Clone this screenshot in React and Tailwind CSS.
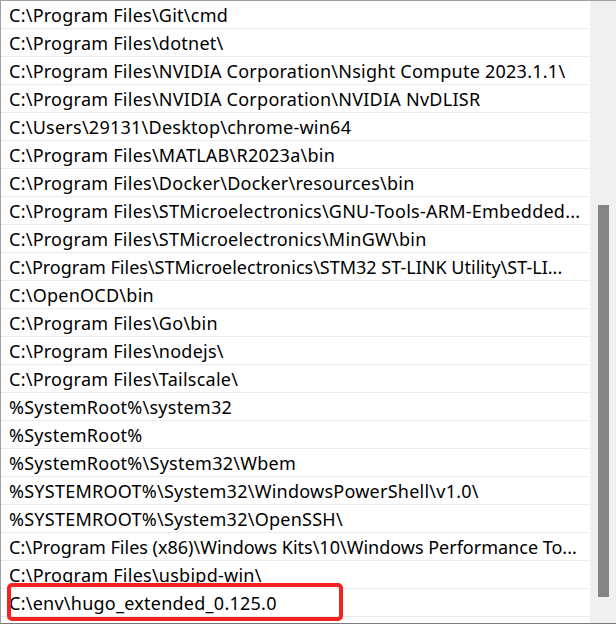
const paths = [
  "C:\\Program Files\\Git\\cmd",
  "C:\\Program Files\\dotnet\\",
  "C:\\Program Files\\NVIDIA Corporation\\Nsight Compute 2023.1.1\\",
  "C:\\Program Files\\NVIDIA Corporation\\NVIDIA NvDLISR",
  "C:\\Users\\29131\\Desktop\\chrome-win64",
  "C:\\Program Files\\MATLAB\\R2023a\\bin",
  "C:\\Program Files\\Docker\\Docker\\resources\\bin",
  "C:\\Program Files\\STMicroelectronics\\GNU-Tools-ARM-Embedded...",
  "C:\\Program Files\\STMicroelectronics\\MinGW\\bin",
  "C:\\Program Files\\STMicroelectronics\\STM32 ST-LINK Utility\\ST-LI...",
  "C:\\OpenOCD\\bin",
  "C:\\Program Files\\Go\\bin",
  "C:\\Program Files\\nodejs\\",
  "C:\\Program Files\\Tailscale\\",
  "%SystemRoot%\\system32",
  "%SystemRoot%",
  "%SystemRoot%\\System32\\Wbem",
  "%SYSTEMROOT%\\System32\\WindowsPowerShell\\v1.0\\",
  "%SYSTEMROOT%\\System32\\OpenSSH\\",
  "C:\\Program Files (x86)\\Windows Kits\\10\\Windows Performance To...",
  "C:\\Program Files\\usbipd-win\\",
  "C:\\env\\hugo_extended_0.125.0",
];

export default function App() {
  return (
    <div className="w-[616px] h-[624px] bg-white overflow-hidden">
      <div
        className="relative flex h-[624px] border-t border-l border-b border-[#a0a0a0] border-b-[#7a7a7a]"
        style={{ fontFamily: '"Noto Sans", "Open Sans", sans-serif' }}
      >
        <div className="flex-1 flex flex-col overflow-hidden">
          {paths.map((p) => (
            <div
              key={p}
              className={
                "h-[28px] shrink-0 flex items-center pl-[8px] border-b border-[#ececec] text-[18px] text-black whitespace-nowrap overflow-hidden leading-none " +
                (p.length > 62 ? "tracking-[0px]" : "tracking-[0.25px]")
              }
            >
              {p}
            </div>
          ))}
        </div>
        <div className="w-[26px] shrink-0 bg-[#f0f0f0] flex justify-center">
          <div className="w-[11px] mt-[204px] h-[392px] bg-[#858585]" />
        </div>
        <div className="absolute left-[6px] top-[582px] w-[336px] h-[38px] border-[4px] border-[#f52222] rounded-[5px]" />
      </div>
    </div>
  );
}
